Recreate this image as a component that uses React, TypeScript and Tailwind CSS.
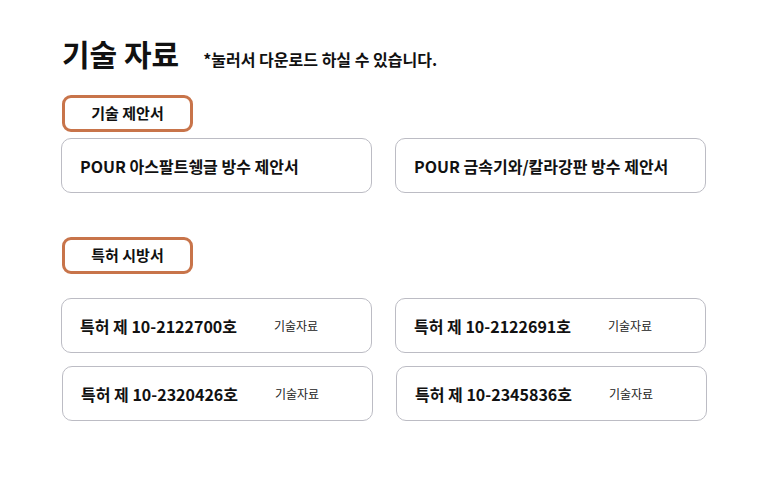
import React from 'react';

const FONT = { fontFamily: '"Noto Sans CJK KR", "Noto Sans", sans-serif' };

const proposals = ['POUR 아스팔트쉥글 방수 제안서', 'POUR 금속기와/칼라강판 방수 제안서'];

const patents = [
  ['특허 제 10-2122700호', '특허 제 10-2122691호'],
  ['특허 제 10-2320426호', '특허 제 10-2345836호'],
];

const Tag: React.FC<{ label: string }> = ({ label }) => (
  <div className="w-[131px] h-[37px] border-[3px] border-[#c8744a] rounded-[9px] flex items-center justify-center text-[15px] font-bold text-[#111]">
    {label}
  </div>
);

const App: React.FC = () => {
  return (
    <div style={FONT} className="w-[768px] h-[502px] bg-white pl-[61px] pt-[32px] text-[#111]">
      <div className="flex items-end">
        <h1 className="text-[30px] font-bold leading-[42px] ml-[1px]">기술 자료</h1>
        <p className="ml-[24px] mb-[4px] text-[16px] font-bold leading-[22px]">*눌러서 다운로드 하실 수 있습니다.</p>
      </div>

      <div className="mt-[21px] ml-[1px]">
        <Tag label="기술 제안서" />
      </div>
      <div className="mt-[6px] grid grid-cols-[311px_311px] gap-x-[23px]">
        {proposals.map((p) => (
          <div
            key={p}
            className="h-[55px] rounded-[10px] border border-[#bcbcc4] flex items-center pl-[18px] text-[16px] font-bold"
          >
            {p}
          </div>
        ))}
      </div>

      <div className="mt-[44px] ml-[1px]">
        <Tag label="특허 시방서" />
      </div>
      <div className="mt-[24px] flex flex-col gap-[13px]">
        {patents.map((row, i) => (
          <div key={i} className={`grid grid-cols-[311px_311px] gap-x-[23px] ${i === 1 ? 'ml-[1px]' : ''}`}>
            {row.map((p) => (
              <div
                key={p}
                className="h-[55px] rounded-[10px] border border-[#bcbcc4] flex items-center pl-[18px]"
              >
                <span className="w-[194px] text-[16px] font-bold">{p}</span>
                <span className="text-[12px] text-[#222]">기술자료</span>
              </div>
            ))}
          </div>
        ))}
      </div>
    </div>
  );
};

export default App;
